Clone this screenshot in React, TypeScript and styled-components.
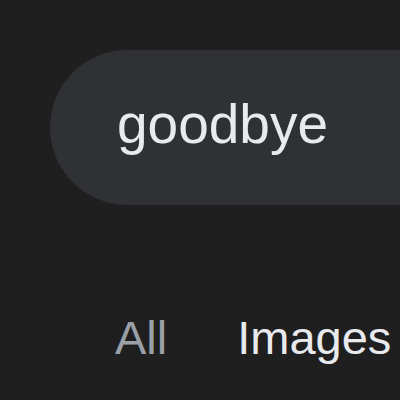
import React from "react";
import styled, { createGlobalStyle } from "styled-components";

const Global = createGlobalStyle`
  html, body {
    margin: 0;
    padding: 0;
    background: #1f1f1f;
    overflow: hidden;
  }
  body {
    font-family: "Liberation Sans", Arial, sans-serif;
  }
`;

const Page = styled.div`
  width: 400px;
  height: 400px;
  overflow: hidden;
  background: #1f1f1f;
  padding: 50px 0 0 50px;
  box-sizing: border-box;
`;

const SearchBar = styled.div`
  width: 520px;
  height: 155px;
  box-sizing: border-box;
  border-radius: 78px;
  background: #303134;
  padding: 47px 0 0 67px;
`;

const Query = styled.div`
  font-size: 55px;
  line-height: 55px;
  color: #e8eaed;
  white-space: nowrap;
`;

const Tabs = styled.div`
  display: flex;
  gap: 70px;
  margin: 109px 0 0 65px;
  white-space: nowrap;
`;

const Tab = styled.div<{ $active?: boolean }>`
  font-size: 47px;
  line-height: 47px;
  color: ${(p) => (p.$active ? "#e8eaed" : "#9aa0a6")};
`;

export default function App() {
  return (
    <>
      <Global />
      <Page>
        <SearchBar>
          <Query>goodbye</Query>
        </SearchBar>
        <Tabs>
          <Tab>All</Tab>
          <Tab $active>Images</Tab>
        </Tabs>
      </Page>
    </>
  );
}
